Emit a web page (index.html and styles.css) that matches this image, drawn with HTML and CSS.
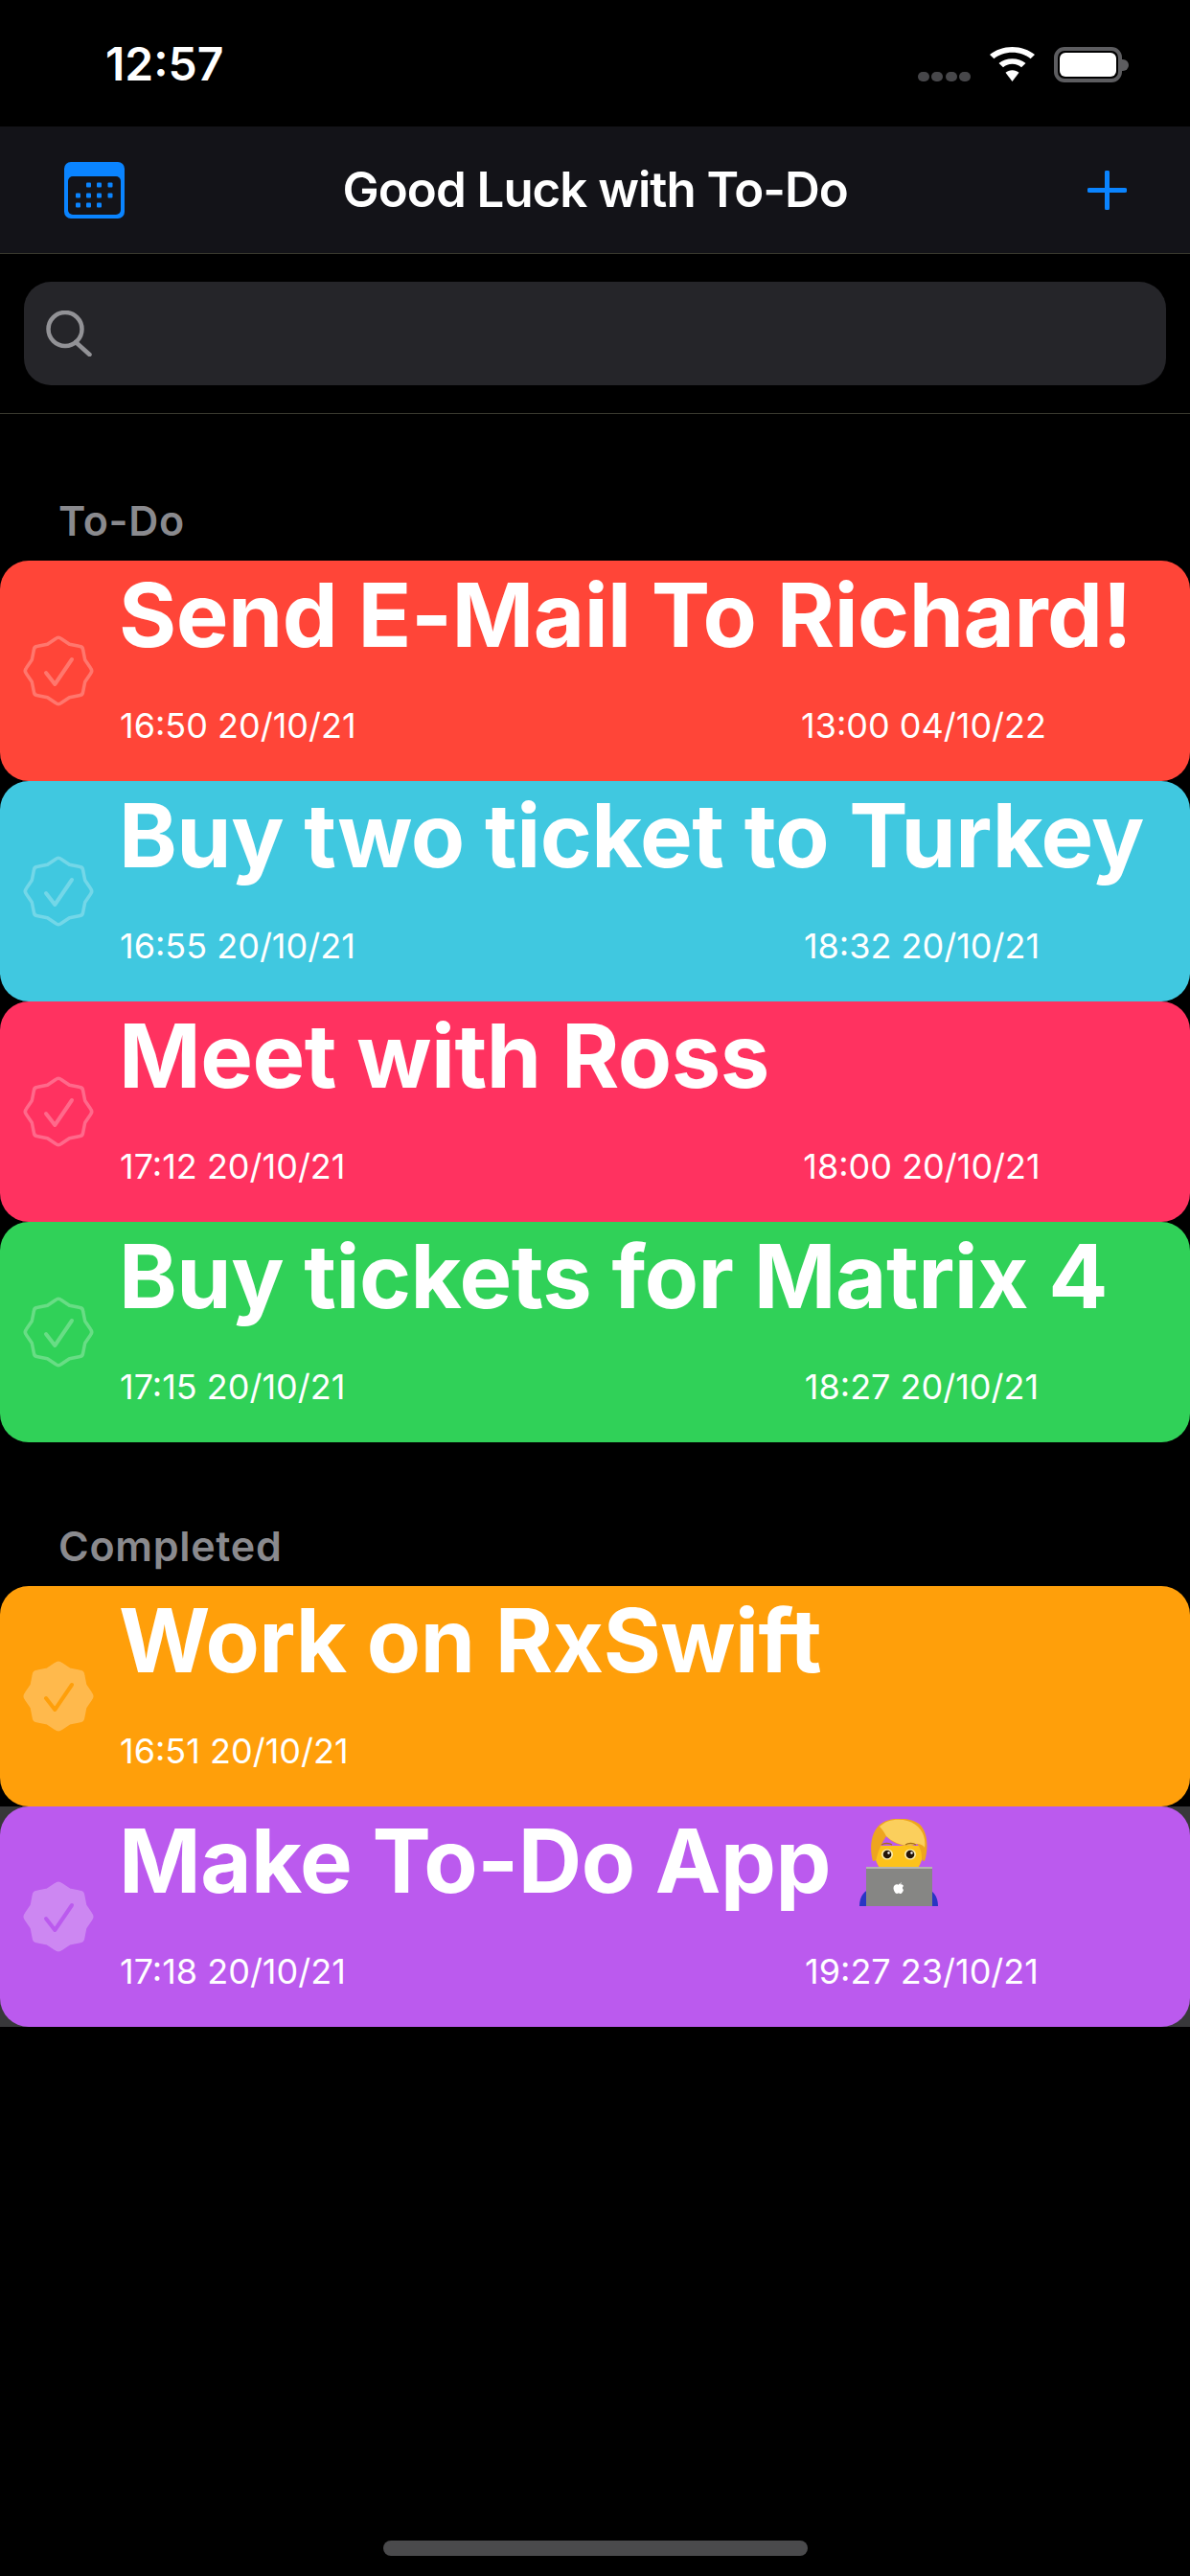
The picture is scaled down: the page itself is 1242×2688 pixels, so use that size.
FILE: index.html
```html
<!DOCTYPE html>
<html lang="en">
<head>
<meta charset="utf-8">
<title>Good Luck with To-Do</title>
<link rel="stylesheet" href="styles.css">
</head>
<body>
<svg class="defs" width="0" height="0" aria-hidden="true">
  <symbol id="seal" viewBox="-40 -40 80 80">
    <path class="seal-shape" d="M-2.900-33.500Q0-36 2.900-33.500L11.500-27.700 21.600-25.700Q25.500-25.500 25.700-21.600L27.700-11.500 33.500-2.900Q36 0 33.500 2.900L27.700 11.500 25.700 21.600Q25.500 25.500 21.600 25.700L11.500 27.700 2.900 33.500Q0 36-2.900 33.500L-11.500 27.700-21.600 25.700Q-25.500 25.500-25.700 21.600L-27.700 11.500-33.500 2.900Q-36 0-33.500-2.900L-27.700-11.500-25.700-21.600Q-25.500-25.500-21.600-25.700L-11.500-27.700Z"/>
    <path class="seal-check" d="M-13 2-3.700 14 14-12"/>
  </symbol>
</svg>
<div class="screen">
  <header class="status">
    <span class="time">12:57</span>
    <div class="status-icons">
      <div class="signal"><i></i><i></i><i></i><i></i></div>
      <svg class="wifi" viewBox="0 0 47 43" preserveAspectRatio="none"><path d="M23.500 0C32.600 0 40.800 3.600 47 9.600L42.600 14.600C37.600 9.700 30.900 6.800 23.500 6.800 16.100 6.800 9.400 9.700 4.400 14.600L0 9.600C6.200 3.600 14.400 0 23.500 0Z"/><path d="M23.500 14.500C28.900 14.500 33.900 16.700 37.500 20.300L33 25.300C30.600 22.800 27.200 21.300 23.500 21.300 19.800 21.300 16.400 22.800 14 25.300L9.500 20.300C13.100 16.700 18.100 14.500 23.500 14.500Z"/><path d="M23.500 29C26.200 29 28.700 30.100 30.500 31.900L23.500 43 16.500 31.900C18.300 30.100 20.800 29 23.500 29Z"/></svg>
      <div class="battery"><div class="battery-level"></div></div>
      <div class="battery-nub"></div>
    </div>
  </header>
  <nav class="navbar">
    <svg class="calendar" viewBox="0 0 63 59">
      <rect class="cal-body" width="63" height="59" rx="7"/>
      <rect class="cal-inner" x="4" y="15" width="55" height="40" rx="5"/>
      <g class="cal-dots">
        <rect x="23" y="21.500" width="5" height="5" rx="1"/><rect x="34" y="21.500" width="5" height="5" rx="1"/><rect x="45.500" y="21.500" width="5" height="5" rx="1"/>
        <rect x="12" y="32.500" width="5" height="5" rx="1"/><rect x="23" y="32.500" width="5" height="5" rx="1"/><rect x="34" y="32.500" width="5" height="5" rx="1"/><rect x="45.500" y="32.500" width="5" height="5" rx="1"/>
        <rect x="12" y="42.500" width="5" height="5" rx="1"/><rect x="23" y="42.500" width="5" height="5" rx="1"/><rect x="34" y="42.500" width="5" height="5" rx="1"/>
      </g>
    </svg>
    <h1 class="nav-title">Good Luck with To-Do</h1>
    <svg class="plus" viewBox="0 0 41 41"><path d="M20.500 2V39M2 20.500H39"/></svg>
  </nav>
  <div class="search-wrap">
    <div class="search">
      <svg class="magnifier" viewBox="0 0 48 48"><circle cx="20" cy="19.500" r="17.500"/><path d="M31 33 45.500 46"/></svg>
    </div>
  </div>

  <section class="section section-todo">
    <h2 class="section-title">To-Do</h2>
    <article class="row red">
      <svg class="badge"><use href="#seal"/></svg>
      <div class="row-body">
        <div class="row-title">Send E-Mail To Richard!</div>
        <div class="row-dates"><span class="date-start">16:50 20/10/21</span><span class="date-end">13:00 04/10/22</span></div>
      </div>
    </article>
    <article class="row teal">
      <svg class="badge"><use href="#seal"/></svg>
      <div class="row-body">
        <div class="row-title">Buy two ticket to Turkey</div>
        <div class="row-dates"><span class="date-start">16:55 20/10/21</span><span class="date-end">18:32 20/10/21</span></div>
      </div>
    </article>
    <article class="row pink">
      <svg class="badge"><use href="#seal"/></svg>
      <div class="row-body">
        <div class="row-title">Meet with Ross</div>
        <div class="row-dates"><span class="date-start">17:12 20/10/21</span><span class="date-end">18:00 20/10/21</span></div>
      </div>
    </article>
    <article class="row green">
      <svg class="badge"><use href="#seal"/></svg>
      <div class="row-body">
        <div class="row-title">Buy tickets for Matrix 4</div>
        <div class="row-dates"><span class="date-start">17:15 20/10/21</span><span class="date-end">18:27 20/10/21</span></div>
      </div>
    </article>
  </section>

  <section class="section section-done">
    <h2 class="section-title">Completed</h2>
    <article class="row orange done">
      <svg class="badge"><use href="#seal"/></svg>
      <div class="row-body">
        <div class="row-title">Work on RxSwift</div>
        <div class="row-dates"><span class="date-start">16:51 20/10/21</span></div>
      </div>
    </article>
    <div class="last-row-backing">
      <article class="row purple done">
        <svg class="badge"><use href="#seal"/></svg>
        <div class="row-body">
          <div class="row-title">Make To-Do App <svg class="emoji" viewBox="0 0 82 91">
            <path fill="#2a35c4" d="M0 91C0 81 5 74 14 72H68C77 74 82 81 82 91Z"/>
            <path fill="#fcc21b" d="M15 28C15 50 25 60 41 60 57 60 67 50 67 28Z"/>
            <path fill="#eea51e" d="M14 44C10 30 12 11 24 4 34-2 52-2 62 5 72 13 72 32 68 44 66 44 65 43 65 40 65 34 63 29 60 26 50 31 36 27 28 18 24 24 20 32 18 40 18 43 16 44 14 44Z"/>
            <path fill="#fbcf5c" d="M28 18C36 26 50 30 60 26 64 26 67 28 68 30 70 18 64 6 50 2 40-1 28 1 21 8 24 11 26 14 28 18Z"/>
            <ellipse cx="29" cy="37" rx="6" ry="5.500" fill="#fdeeb0"/><ellipse cx="53" cy="37" rx="6" ry="5.500" fill="#fdeeb0"/>
            <circle cx="29" cy="37" r="4.300" fill="#241509"/><circle cx="53" cy="37" r="4.300" fill="#241509"/>
            <circle cx="30.500" cy="35.500" r="1.200" fill="#fff"/><circle cx="54.500" cy="35.500" r="1.200" fill="#fff"/>
            <path stroke="#a87012" stroke-width="1.500" fill="none" d="M23 27C26 25 31 25 34 27M48 27C51 25 56 25 59 27"/>
            <rect x="7" y="50" width="69" height="41" fill="#868684"/>
            <rect x="7" y="50" width="69" height="2" fill="#b4b4b0"/>
            <path fill="#fff" d="M41 68C42 68 43 67 44 66 44 67 43 68 42 68.500 43.500 68 45.500 68.500 46 70 44.500 71 44.500 73 46 74 45.500 76 44 78 43 78 42 78 41.500 77.500 41 77.500 40 77.500 39.500 78 39 78 37.500 78 35.500 74.500 35.500 72 35.500 69.500 37.500 68.200 39 68.200 39.800 68.200 40.500 68.800 41 68.800Z"/>
          </svg></div>
          <div class="row-dates"><span class="date-start">17:18 20/10/21</span><span class="date-end">19:27 23/10/21</span></div>
        </div>
      </article>
    </div>
  </section>

  <div class="home-bar"></div>
</div>
</body>
</html>
```
FILE: styles.css
```css
* { box-sizing: border-box; }
html, body { margin: 0; padding: 0; background: #000; }
.defs { display: block; height: 0; }
.screen {
  width: 1242px;
  height: 2688px;
  background: #000;
  color: #fff;
  font-family: Inter, "Liberation Sans", sans-serif;
  display: flex;
  flex-direction: column;
  overflow: hidden;
}

/* status bar */
.status {
  height: 132px;
  display: flex;
  align-items: flex-start;
  justify-content: space-between;
  padding: 34px 64px 0 110px;
}
.time { font-size: 48px; line-height: 66px; font-weight: 600; letter-spacing: 0; }
.status-icons { display: flex; align-items: flex-start; margin-top: 15px; }
.signal { display: flex; gap: 2.300px; margin-top: 26px; margin-right: 20px; }
.signal i { display: block; width: 12px; height: 10px; border-radius: 5px; background: #47474a; }
.wifi { width: 47px; height: 36px; fill: #fff; margin-right: 20px; }
.battery {
  width: 71px;
  height: 37px;
  border: 4px solid #5d5d60;
  border-radius: 11px;
  padding: 2px;
}
.battery-level { width: 100%; height: 100%; background: #fff; border-radius: 6px; }
.battery-nub { width: 7px; height: 12px; margin-top: 13px; background: #5d5d60; border-radius: 0 6px 6px 0; }

/* nav bar */
.navbar {
  height: 133px;
  background: #131318;
  border-bottom: 1px solid #38382e;
  display: grid;
  grid-template-columns: 1fr auto 1fr;
  align-items: center;
  padding: 0 66px 0 66.500px;
}
.calendar { width: 63px; height: 59px; display: block; }
.cal-body { fill: #0a84ff; }
.cal-inner { fill: #131318; }
.cal-dots { fill: #0a84ff; }
.nav-title { margin: 0; font-size: 51px; line-height: 60px; font-weight: 600; letter-spacing: -1px; }
.plus { width: 41px; height: 41px; fill: none; stroke: #0a84ff; stroke-width: 5; stroke-linecap: round; justify-self: end; }

/* search */
.search-wrap {
  height: 167px;
  padding: 29px 25px 0;
  border-bottom: 1px solid #38382e;
}
.search {
  height: 108px;
  background: #252529;
  border-radius: 28px;
  display: flex;
  align-items: center;
  padding: 0 0 0 23px;
}
.magnifier { width: 48px; height: 48px; fill: none; stroke: #929296; stroke-width: 4.500; stroke-linecap: round; }

/* sections */
.section { display: flex; flex-direction: column; }
.section-todo { padding-top: 93px; }
.section-done { margin-top: 90px; }
.section-title {
  margin: 0;
  padding-left: 61px;
  height: 60px;
  font-size: 43px;
  line-height: 36px;
  font-weight: 600;
  letter-spacing: 0.700px;
  color: #8a8a8e;
}

/* rows */
.row {
  --seal-fill: none;
  --check-stroke: #fff;
  height: 230px;
  width: 1242px;
  border-radius: 30px;
  display: flex;
  align-items: center;
}
.done { --seal-fill: #fff; }
.red { background: #ff4538; }
.teal { background: #40c8e0; }
.pink { background: #ff3260; }
.green { background: #30d158; }
.orange { background: #ff9f0a; --check-stroke: #ff9f0a; }
.purple { background: #bb5aee; --check-stroke: #bb5aee; }
.last-row-backing { background: #38383a; }

.badge { width: 80px; height: 80px; margin-left: 21px; flex: none; overflow: visible; }
.seal-shape { fill: var(--seal-fill); stroke: #fff; stroke-width: 3.500; stroke-linejoin: round; opacity: 0.27; }
.seal-check { fill: none; stroke: var(--check-stroke); stroke-width: 4; stroke-linecap: round; stroke-linejoin: round; }
.row:not(.done) .badge { --check-stroke: rgba(255, 255, 255, 0.27); }

.row-body { margin-left: 24px; height: 230px; flex: 1; display: flex; flex-direction: column; }
.row-title { height: 116px; margin-left: -1px; font-size: 92px; line-height: 113px; font-weight: 700; white-space: nowrap; letter-spacing: -0.500px; }
.row-dates { display: flex; margin-top: 34px; font-size: 36px; line-height: 44px; }
.date-start { width: 711px; flex: none; }
.date-end { width: 252px; flex: none; text-align: center; white-space: nowrap; }
.emoji { width: 82px; height: 91px; vertical-align: -14px; margin-left: 9px; }

/* home indicator */
.home-bar {
  margin: auto auto 21px;
  width: 443px;
  height: 16px;
  border-radius: 8px;
  background: #4a4a4c;
}
```
